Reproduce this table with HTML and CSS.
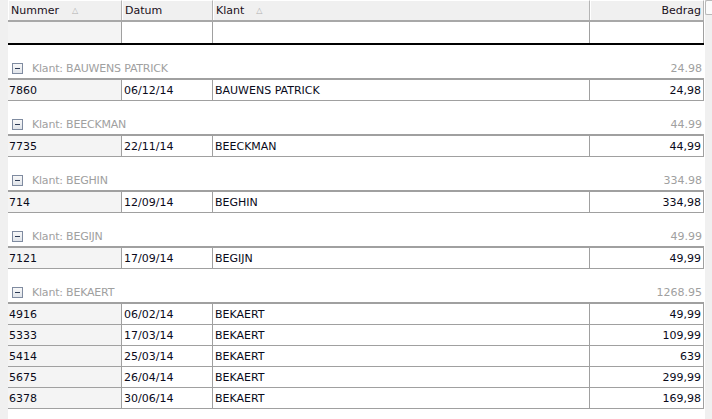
FILE: index.html
```html
<!DOCTYPE html>
<html>
<head>
<meta charset="utf-8">
<link rel="stylesheet" href="styles.css">
</head>
<body>
<div class="app">
  <div class="gutter"></div>
  <div class="grid">
    <div class="row head">
      <div class="hc">Nummer<span class="sort">&#9651;</span></div>
      <div class="hc">Datum</div>
      <div class="hc klant">Klant<span class="sort">&#9651;</span></div>
      <div class="hc num">Bedrag</div>
    </div>
    <div class="row filter">
      <div class="fc first"></div>
      <div class="fc"></div>
      <div class="fc"></div>
      <div class="fc last"></div>
    </div>
    <div class="rule"></div>

    <div class="group">
      <div class="ghead"><span class="gbox"></span><span class="glabel">Klant: BAUWENS PATRICK</span><span class="gsum">24.98</span></div>
      <div class="rows">
        <div class="row data"><div class="c first">7860</div><div class="c">06/12/14</div><div class="c">BAUWENS PATRICK</div><div class="c num">24,98</div></div>
      </div>
    </div>

    <div class="group">
      <div class="ghead"><span class="gbox"></span><span class="glabel">Klant: BEECKMAN</span><span class="gsum">44.99</span></div>
      <div class="rows">
        <div class="row data"><div class="c first">7735</div><div class="c">22/11/14</div><div class="c">BEECKMAN</div><div class="c num">44,99</div></div>
      </div>
    </div>

    <div class="group">
      <div class="ghead"><span class="gbox"></span><span class="glabel">Klant: BEGHIN</span><span class="gsum">334.98</span></div>
      <div class="rows">
        <div class="row data"><div class="c first">714</div><div class="c">12/09/14</div><div class="c">BEGHIN</div><div class="c num">334,98</div></div>
      </div>
    </div>

    <div class="group">
      <div class="ghead"><span class="gbox"></span><span class="glabel">Klant: BEGIJN</span><span class="gsum">49.99</span></div>
      <div class="rows">
        <div class="row data"><div class="c first">7121</div><div class="c">17/09/14</div><div class="c">BEGIJN</div><div class="c num">49,99</div></div>
      </div>
    </div>

    <div class="group">
      <div class="ghead"><span class="gbox"></span><span class="glabel">Klant: BEKAERT</span><span class="gsum">1268.95</span></div>
      <div class="rows">
        <div class="row data"><div class="c first">4916</div><div class="c">06/02/14</div><div class="c">BEKAERT</div><div class="c num">49,99</div></div>
        <div class="row data"><div class="c first">5333</div><div class="c">17/03/14</div><div class="c">BEKAERT</div><div class="c num">109,99</div></div>
        <div class="row data"><div class="c first">5414</div><div class="c">25/03/14</div><div class="c">BEKAERT</div><div class="c num">639</div></div>
        <div class="row data"><div class="c first">5675</div><div class="c">26/04/14</div><div class="c">BEKAERT</div><div class="c num">299,99</div></div>
        <div class="row data"><div class="c first">6378</div><div class="c">30/06/14</div><div class="c">BEKAERT</div><div class="c num">169,98</div></div>
      </div>
    </div>
  </div>
  <div class="scroll"><div class="thumb"></div></div>
</div>
</body>
</html>
```
FILE: styles.css
```css
html, body {
  margin: 0;
  padding: 0;
  background: #ffffff;
  font-family: "DejaVu Sans", Tahoma, sans-serif;
  font-size: 11px;
  color: #000;
}
.app {
  display: flex;
  width: 712px;
  height: 419px;
  overflow: hidden;
}
.gutter {
  width: 8px;
  background: #f0f0f0;
  flex: none;
}
.grid {
  width: 696px;
  flex: none;
}
.scroll {
  width: 8px;
  flex: none;
  background: #f0f0f0;
  border-left: 1px solid #ffffff;
  box-sizing: border-box;
}
.thumb {
  height: 15px;
  width: 7px;
  background: #fbfbfb;
  border: 1px solid #b8b8b8;
  border-right: none;
  border-radius: 2px 0 0 2px;
  box-sizing: border-box;
}
.row {
  display: grid;
  grid-template-columns: 114px 91px 377px 114px;
}
.head {
  height: 20px;
  border-bottom: 2px solid #a8a8a8;
  background: #f0f0f0;
}
.hc {
  display: flex;
  align-items: center;
  padding: 0 4px 0 3px;
  border-top: 1px solid #ffffff;
  border-right: 1px solid #b4b4b4;
  box-shadow: inset 1px 0 0 #ffffff;
  white-space: nowrap;
  color: #1a0f1a;
}
.hc.num { justify-content: flex-end; padding-right: 2px; }
.sort {
  font-size: 8px;
  color: #b0b0b0;
  margin-left: 13px;
}
.hc.klant .sort { margin-left: 12px; }
.filter {
  height: 21px;
}
.fc {
  border-right: 1px solid #a0a0a0;
  background: #fff;
}
.fc.first { background: #f4f4f4; }
.rule {
  height: 2px;
  background: #000;
}
.group {
  margin-top: 13px;
}
.ghead {
  display: flex;
  align-items: center;
  height: 19px;
  padding-top: 1px;
  color: #a0a0a0;
  padding-left: 4px;
  padding-right: 2px;
}
.gbox {
  width: 9px;
  height: 9px;
  border: 1px solid #7f8ba0;
  background: linear-gradient(#f8f8f8, #e0e4ea);
  position: relative;
  margin-right: 9px;
  flex: none;
}
.gbox::after {
  content: "";
  position: absolute;
  left: 2px;
  top: 4px;
  width: 5px;
  height: 1px;
  background: #2c3a55;
}
.glabel { flex: 1; letter-spacing: -0.2px; }
.gsum { text-align: right; }
.rows {
  border-top: 2px solid #a0a0a0;
}
.data {
  height: 20px;
  border-bottom: 1px solid #a0a0a0;
}
.c {
  display: flex;
  align-items: center;
  padding: 0 2px;
  border-right: 1px solid #a0a0a0;
  white-space: nowrap;
  color: #0a0a1a;
}
.c.first { background: #f4f4f4; padding-left: 1px; }
.c.num { justify-content: flex-end; }
```
